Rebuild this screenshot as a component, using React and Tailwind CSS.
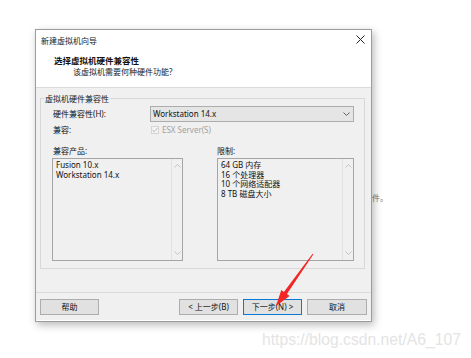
import React from "react";

const font = { fontFamily: '"Noto Sans", "Noto Sans CJK SC", sans-serif' };

function Chevron({ up = false, color = "#606060" }) {
  return (
    <svg width="7" height="4" viewBox="0 0 7 4" className="block">
      <polyline
        points={up ? "0.5,3.5 3.5,0.5 6.5,3.5" : "0.5,0.5 3.5,3.5 6.5,0.5"}
        fill="none"
        stroke={color}
        strokeWidth="1"
      />
    </svg>
  );
}

function ListBox({ width, items }) {
  return (
    <div className={`flex h-[103px] border border-[#a5a5a5] bg-[#f0f0f0]`} style={{ width }}>
      <div className="flex-1 pl-[3px] pt-[1px] leading-[9.5px] text-[8px] text-[#111]">
        {items.map((t) => (
          <div key={t}>{t}</div>
        ))}
      </div>
      <div className="flex w-[11px] flex-col items-center justify-between border-l border-[#e2e2e2] py-[5px]">
        <Chevron up color="#c2c2c2" />
        <Chevron color="#c2c2c2" />
      </div>
    </div>
  );
}

function Btn({ children, primary = false, w = "w-[59px]" }) {
  return (
    <div
      className={`flex h-[16px] ${w} items-center justify-center text-[8px] text-[#111] bg-[#e1e1e1] border ${
        primary ? "border-[#0a78d7]" : "border-[#adadad]"
      }`}
    >
      {children}
    </div>
  );
}

export default function App() {
  return (
    <div className="relative h-[358px] w-[471px] overflow-hidden bg-white" style={font}>
      {/* background text fragment behind the window */}
      <div className="absolute left-[372px] top-[192px] text-[8px] leading-[11px] text-[#7a7a7a]">件。</div>

      <div className="pt-[29px] pl-[35px]">
        <div className="relative flex h-[293px] w-[337px] flex-col border border-[#9c9c9c] bg-white shadow-[2px_3px_8px_rgba(0,0,0,0.28)]">
          {/* header */}
          <div className="flex h-[58px] flex-col border-b border-[#dadada] bg-white">
            <div className="flex h-[20px] items-center justify-between pl-[5px] pr-[6px]">
              <span className="text-[8px] leading-[11px] text-[#222]">新建虚拟机向导</span>
              <svg width="9" height="9" viewBox="0 0 9 9" className="block -mt-[1px]">
                <path d="M0.5 0.5 L8.5 8.5 M8.5 0.5 L0.5 8.5" stroke="#222" strokeWidth="1" />
              </svg>
            </div>
            <div className="mt-[5px] pl-[18px] text-[8.5px] font-bold leading-[11px] text-[#111]">
              选择虚拟机硬件兼容性
            </div>
            <div className="pl-[37px] text-[8px] leading-[11px] text-[#222]">该虚拟机需要何种硬件功能?</div>
          </div>

          {/* body */}
          <div className="flex h-[204px] flex-col bg-[#f0f0f0] pl-[4px] pr-[6px]">
            <fieldset className="mt-[5px] h-[176px] border border-[#d8d8d8] pb-[7px]">
              <legend className="ml-[3px] px-[1px] text-[8px] leading-[11px] text-[#222]">虚拟机硬件兼容性</legend>
              <div className="flex flex-col pl-[11px]">
                <div className="mt-[2px] flex h-[16px] items-center">
                  <span className="ml-[1px] w-[97px] text-[8px] text-[#111]">硬件兼容性(H):</span>
                  <div className="flex h-[16px] w-[204px] items-center justify-between border border-[#adadad] bg-[#e5e5e5] pl-[2px] pr-[3px]">
                    <span className="text-[8px] text-[#111]">Workstation 14.x</span>
                    <Chevron />
                  </div>
                </div>
                <div className="mt-[1px] flex h-[14px] items-center">
                  <span className="ml-[1px] w-[97px] text-[8px] text-[#111]">兼容:</span>
                  <div className="ml-[1px] flex h-[8px] w-[8px] items-center justify-center border border-[#d4d4d4] bg-[#f4f4f4]">
                    <svg width="7" height="6" viewBox="0 0 7 6" className="block">
                      <polyline points="0.5,3 2.5,5 6.5,0.5" fill="none" stroke="#b0b0b0" strokeWidth="1" />
                    </svg>
                  </div>
                  <span className="ml-[3px] text-[8px] text-[#a2a2a2]">ESX Server(S)</span>
                </div>
                <div className="mt-[8px] flex gap-[34px]">
                  <div className="flex flex-col">
                    <span className="ml-[1px] text-[8px] leading-[11px] text-[#111]">兼容产品:</span>
                    <div className="mt-[2px]">
                      <ListBox width="131px" items={["Fusion 10.x", "Workstation 14.x"]} />
                    </div>
                  </div>
                  <div className="flex flex-col">
                    <span className="text-[8px] leading-[11px] text-[#111]">限制:</span>
                    <div className="mt-[2px]">
                      <ListBox
                        width="137px"
                        items={["64 GB 内存", "16 个处理器", "10 个网络适配器", "8 TB 磁盘大小"]}
                      />
                    </div>
                  </div>
                </div>
              </div>
            </fieldset>
          </div>

          {/* footer */}
          <div className="flex h-[28px] items-start border-t border-[#dadada] bg-[#f0f0f0] pl-[4px] pr-[4px] pt-[6px]">
            <Btn>帮助</Btn>
            <div className="ml-auto flex gap-[5px]">
              <Btn>&lt; 上一步(B)</Btn>
              <Btn primary>下一步(N) &gt;</Btn>
              <Btn w="w-[60px]">取消</Btn>
            </div>
          </div>
        </div>
      </div>

      {/* watermark */}
      <div
        className="absolute left-[262px] top-[330px] text-[15.7px] leading-[20px] text-[#e4e4e4]"
        style={{ fontFamily: '"Liberation Sans", Arial, sans-serif' }}
      >
        https://blog.csdn.net/A6_107
      </div>

      {/* red arrow annotation */}
      <svg className="absolute left-0 top-0" width="471" height="358" viewBox="0 0 471 358">
        <polygon
          points="276,306 281.3,290.1 283.9,291.9 312.6,253.7 313.4,254.3 286.9,294.1 289.5,295.9"
          fill="#f42525"
        />
      </svg>
    </div>
  );
}
